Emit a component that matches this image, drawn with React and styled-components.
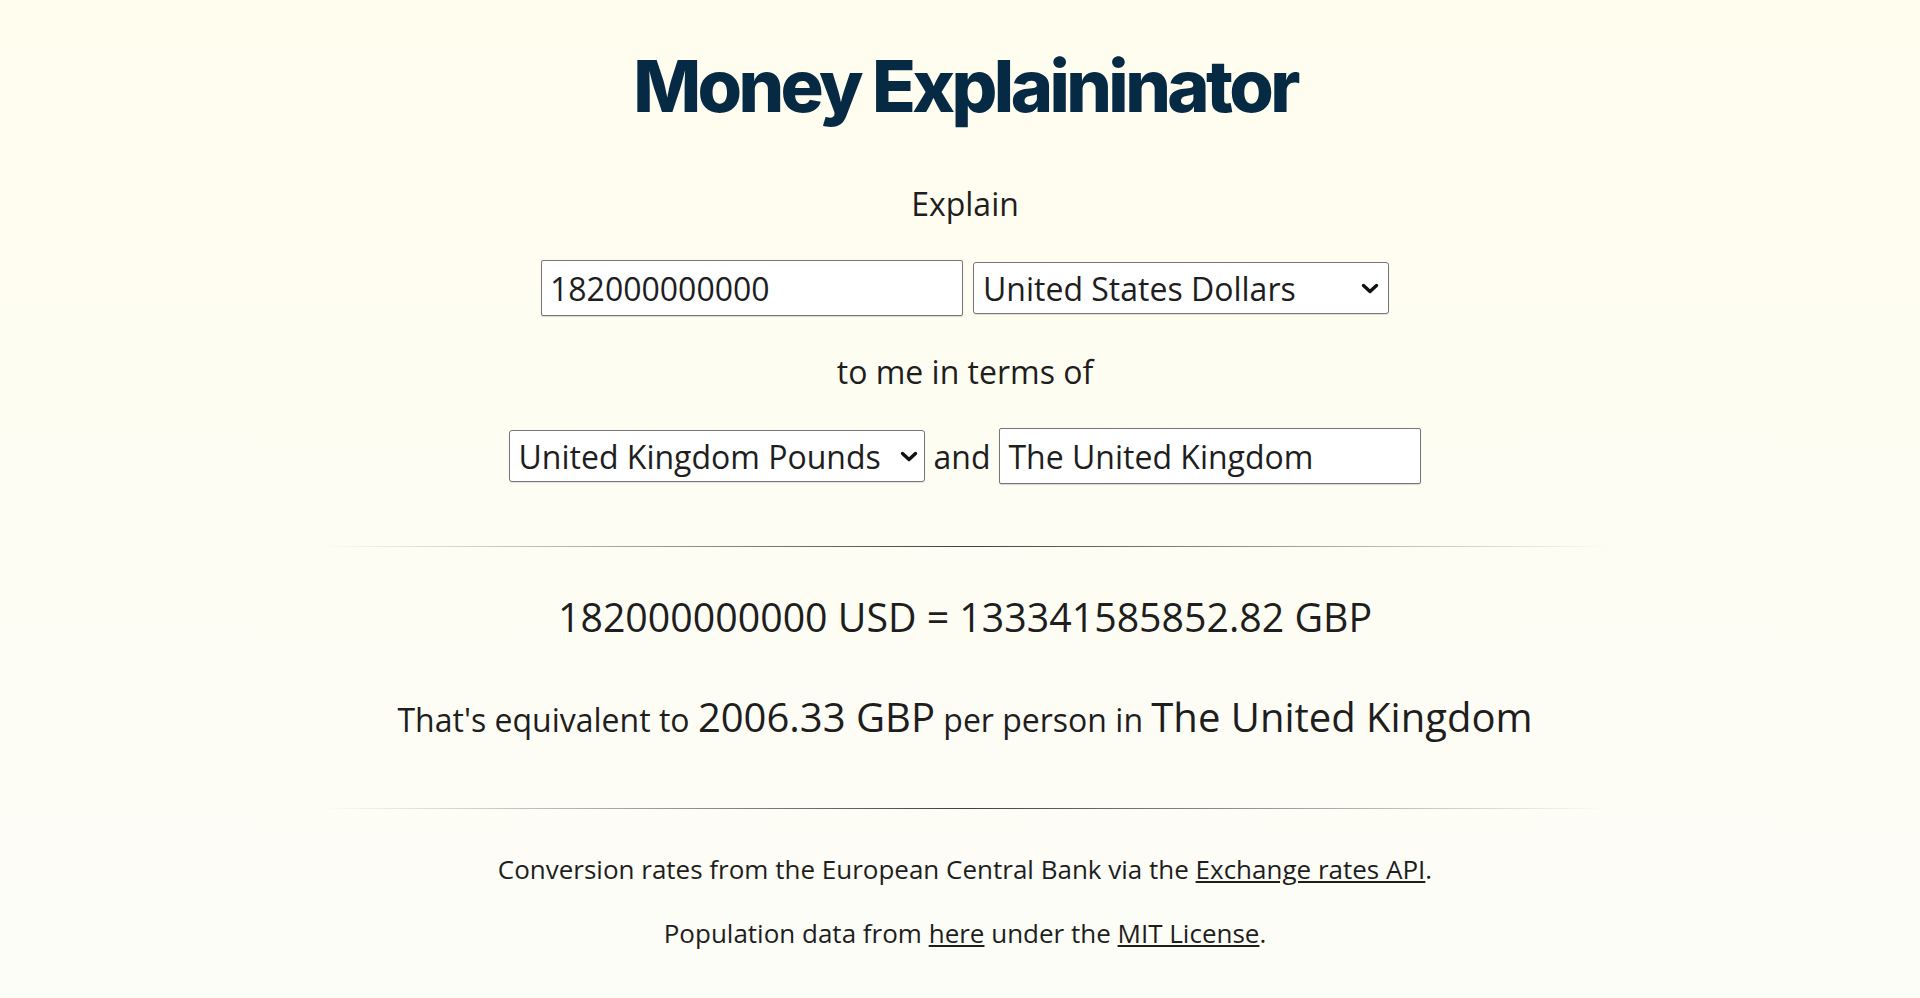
import React from 'react'
import styled, { createGlobalStyle } from 'styled-components'

const GlobalStyle = createGlobalStyle`
  html, body {
    margin: 0;
    padding: 0;
  }
  body {
    min-height: 100vh;
    background: linear-gradient(180deg, #fffdee 0%, #fdfdf8 100%);
    font-family: 'Open Sans', 'Liberation Sans', sans-serif;
    color: #1e1e1e;
  }
`

const Page = styled.main`
  min-height: 998px;
  padding-left: 10px;
  text-align: center;
  display: flex;
  flex-direction: column;
  align-items: center;
`

const Title = styled.h1`
  margin: 0;
  padding-top: 39px;
  font-family: Inter, 'Open Sans', sans-serif;
  font-weight: 800;
  font-size: 72px;
  line-height: 94px;
  letter-spacing: -0.05em;
  color: #072a44;
`

const Line = styled.p`
  margin: ${(p) => p.$top || 0}px 0 0;
  font-size: ${(p) => p.$size || 32}px;
  line-height: ${(p) => p.$lh || 48}px;
`

const Row = styled.div`
  margin-top: ${(p) => p.$top}px;
  display: flex;
  align-items: center;
  justify-content: center;
  gap: ${(p) => p.$gap || 10}px;
  font-size: 32px;
`

const TextInput = styled.input`
  box-sizing: border-box;
  width: 422px;
  height: 56px;
  padding: 0 8px;
  font-family: 'Open Sans', 'Liberation Sans', sans-serif;
  font-size: 32px;
  color: #1e1e1e;
  background: #fff;
  border: 1px solid #767676;
  border-radius: 2px;
  box-shadow: 0 1px 1px rgba(0, 0, 0, 0.15);
  outline: none;
`

const SelectWrap = styled.span`
  position: relative;
  display: inline-flex;
`

const Select = styled.select`
  box-sizing: border-box;
  width: 416px;
  height: 52px;
  padding: 0 30px 0 9px;
  appearance: none;
  font-family: 'Open Sans', 'Liberation Sans', sans-serif;
  font-size: 32px;
  color: #1e1e1e;
  background: #fff;
  border: 1px solid #767676;
  border-radius: 3px;
  box-shadow: 0 1px 1px rgba(0, 0, 0, 0.12);
  outline: none;
`

const Chevron = styled.svg`
  position: absolute;
  right: ${(p) => p.$right || 9}px;
  top: 50%;
  margin-top: -5px;
  pointer-events: none;
`

const Rule = styled.hr`
  width: 1290px;
  height: 1px;
  margin: ${(p) => p.$top}px 0 0;
  border: 0;
  background: linear-gradient(
    to right,
    rgba(0, 0, 0, 0),
    rgba(0, 0, 0, 0.75),
    rgba(0, 0, 0, 0)
  );
`

const Big = styled.span`
  font-size: 40px;
`

const Link = styled.a`
  color: inherit;
  text-decoration: underline;
`

const currencies = [
  ['USD', 'United States Dollars'],
  ['GBP', 'United Kingdom Pounds'],
  ['EUR', 'Euros'],
]

const CurrencySelect = ({ value, onChange, arrowRight }) => (
  <SelectWrap>
    <Select value={value} onChange={(e) => onChange(e.target.value)}>
      {currencies.map(([code, name]) => (
        <option key={code} value={code}>
          {name}
        </option>
      ))}
    </Select>
    <Chevron $right={arrowRight} width='18' height='11' viewBox='0 0 18 11'>
      <polyline
        points='2.5,2.5 9,8.5 15.5,2.5'
        fill='none'
        stroke='#111'
        strokeWidth='3.4'
        strokeLinecap='round'
        strokeLinejoin='round'
      />
    </Chevron>
  </SelectWrap>
)

const App = () => {
  const [amount, setAmount] = React.useState('182000000000')
  const [from, setFrom] = React.useState('USD')
  const [to, setTo] = React.useState('GBP')
  const [country, setCountry] = React.useState('The United Kingdom')

  return (
    <>
      <GlobalStyle />
      <Page>
        <Title>Money Explaininator</Title>
        <Line $top={47}>Explain</Line>
        <Row $top={32}>
          <TextInput value={amount} onChange={(e) => setAmount(e.target.value)} />
          <CurrencySelect value={from} onChange={setFrom} arrowRight={10} />
        </Row>
        <Line $top={32}>to me in terms of</Line>
        <Row $top={32} $gap={9}>
          <CurrencySelect value={to} onChange={setTo} arrowRight={7} />
          <span>and</span>
          <TextInput value={country} onChange={(e) => setCountry(e.target.value)} />
        </Row>
        <Rule $top={62} />
        <Line $top={40} $size={39.3} $lh={60}>
          182000000000 USD = 133341585852.82 GBP
        </Line>
        <Line $top={40} $lh={60}>
          That's equivalent to <Big>2006.33 GBP</Big> per person in{' '}
          <Big>The United Kingdom</Big>
        </Line>
        <Rule $top={58} />
        <Line $top={42} $size={26} $lh={36}>
          Conversion rates from the European Central Bank via the{' '}
          <Link href='#'>Exchange rates API</Link>.
        </Line>
        <Line $top={28} $size={26} $lh={36}>
          Population data from <Link href='#'>here</Link> under the{' '}
          <Link href='#'>MIT License</Link>.
        </Line>
      </Page>
    </>
  )
}

export default App
